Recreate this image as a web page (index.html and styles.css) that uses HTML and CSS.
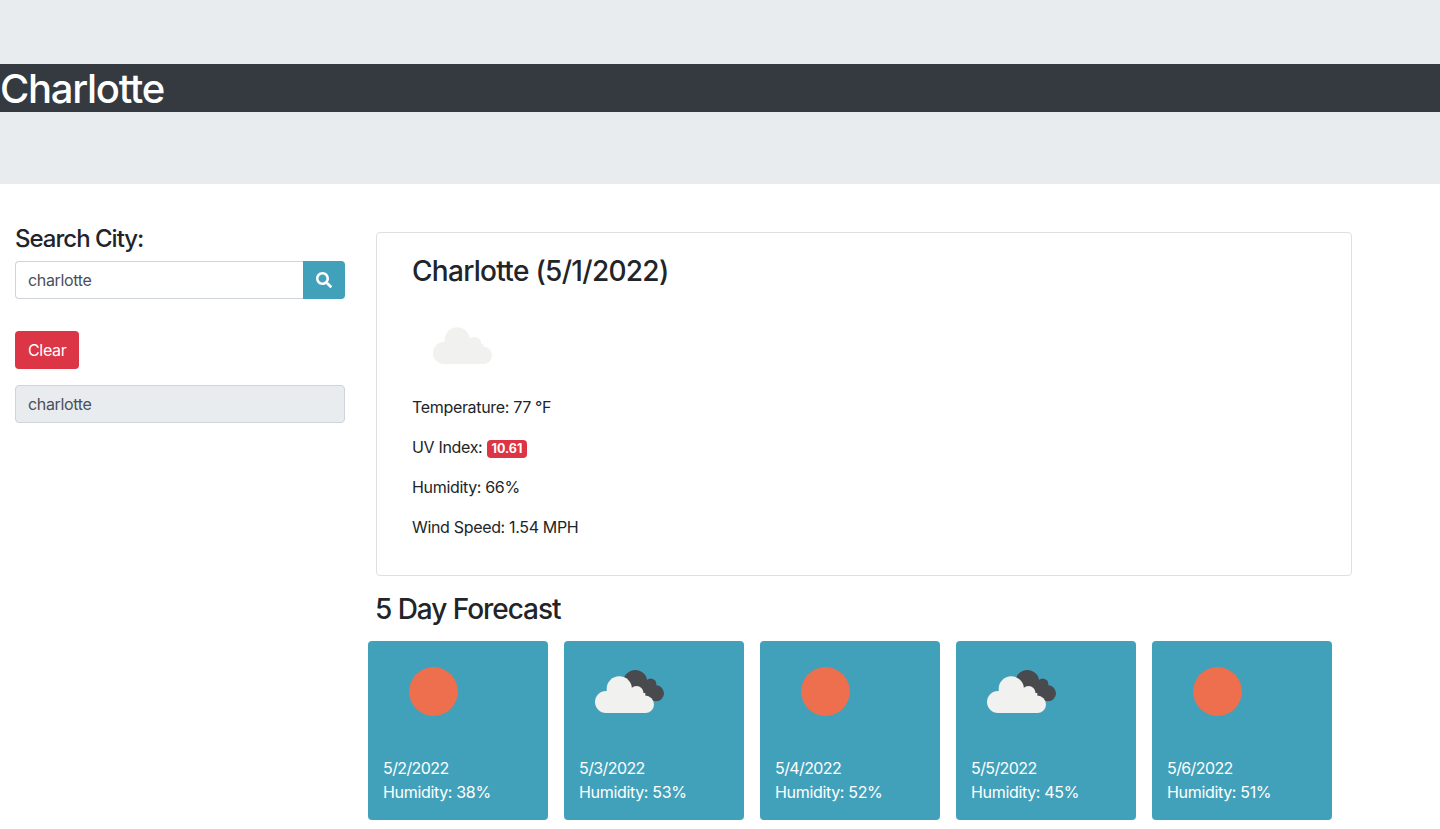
FILE: index.html
```html
<!DOCTYPE html>
<html lang="en">
<head>
  <meta charset="UTF-8" />
  <meta name="viewport" content="width=device-width, initial-scale=1.0"/>
  <title>Weather Dashboard</title>
  <link rel="stylesheet" href="styles.css">
</head>
<body>
  <header class="jumbotron">
    <h1 class="city-banner">Charlotte</h1>
  </header>

  <div class="page-row">
    <aside class="sidebar">
      <h4 class="search-label">Search City:</h4>
      <div class="search-group">
        <input class="search-input" type="text" value="charlotte" />
        <button class="search-btn" aria-label="Search">
          <svg width="16" height="16" viewBox="0 0 512 512"><path fill="#fff" d="M505 442.7L405.3 343c-4.5-4.5-10.6-7-17-7H372c27.6-35.3 44-79.7 44-128C416 93.1 322.9 0 208 0S0 93.1 0 208s93.1 208 208 208c48.3 0 92.7-16.4 128-44v16.3c0 6.4 2.5 12.5 7 17l99.7 99.7c9.4 9.4 24.6 9.4 33.9 0l28.3-28.3c9.4-9.4 9.4-24.6.1-34zM208 336c-70.7 0-128-57.2-128-128 0-70.7 57.2-128 128-128 70.7 0 128 57.2 128 128 0 70.7-57.2 128-128 128z"/></svg>
        </button>
      </div>
      <button class="clear-btn">Clear</button>
      <div class="history-item">charlotte</div>
    </aside>

    <main class="content">
      <section class="current-card">
        <h3 class="current-title">Charlotte (5/1/2022)</h3>
        <svg class="current-icon" width="100" height="100" viewBox="0 0 100 100">
          <use href="#cloud" />
        </svg>
        <p class="stat">Temperature: 77 °F</p>
        <p class="stat">UV Index: <span class="uv-badge">10.61</span></p>
        <p class="stat">Humidity: 66%</p>
        <p class="stat">Wind Speed: 1.54 MPH</p>
      </section>

      <h3 class="forecast-title">5 Day Forecast</h3>
      <div class="forecast-row">
        <div class="forecast-card">
          <svg class="forecast-icon" width="100" height="100" viewBox="0 0 100 100"><use href="#sun"/></svg>
          <div class="forecast-text forecast-date">5/2/2022</div>
          <div class="forecast-text">Humidity: 38%</div>
        </div>
        <div class="forecast-card">
          <svg class="forecast-icon" width="100" height="100" viewBox="0 0 100 100"><use href="#dark-cloud"/><use href="#cloud" x="-5"/></svg>
          <div class="forecast-text forecast-date">5/3/2022</div>
          <div class="forecast-text">Humidity: 53%</div>
        </div>
        <div class="forecast-card">
          <svg class="forecast-icon" width="100" height="100" viewBox="0 0 100 100"><use href="#sun"/></svg>
          <div class="forecast-text forecast-date">5/4/2022</div>
          <div class="forecast-text">Humidity: 52%</div>
        </div>
        <div class="forecast-card">
          <svg class="forecast-icon" width="100" height="100" viewBox="0 0 100 100"><use href="#dark-cloud"/><use href="#cloud" x="-5"/></svg>
          <div class="forecast-text forecast-date">5/5/2022</div>
          <div class="forecast-text">Humidity: 45%</div>
        </div>
        <div class="forecast-card">
          <svg class="forecast-icon" width="100" height="100" viewBox="0 0 100 100"><use href="#sun"/></svg>
          <div class="forecast-text forecast-date">5/6/2022</div>
          <div class="forecast-text">Humidity: 51%</div>
        </div>
      </div>
    </main>
  </div>

  <svg class="icon-defs" width="0" height="0">
    <defs>
      <circle id="sun" cx="50.5" cy="50.5" r="24.4" fill="#ee6f4d"/>
      <g id="cloud" fill="#f1f1ef">
        <circle cx="45.3" cy="48" r="12.7"/>
        <circle cx="62.5" cy="52" r="7"/>
        <circle cx="32" cy="61" r="11"/>
        <circle cx="71.3" cy="63.3" r="8.7"/>
        <rect x="32" y="52" width="39.3" height="20"/>
      </g>
      <g id="dark-cloud" fill="#484a4e">
        <circle cx="56.3" cy="41" r="12"/>
        <circle cx="71.7" cy="43.3" r="5.7"/>
        <circle cx="77" cy="52.3" r="8"/>
        <rect x="60" y="44" width="17" height="16"/>
      </g>
    </defs>
  </svg>
</body>
</html>
```

FILE: styles.css
```css
* {
  box-sizing: border-box;
}

body {
  margin: 0;
  font-family: Inter, 'Noto Sans', sans-serif;
  font-size: 16px;
  line-height: 1.5;
  letter-spacing: -0.33px;
  color: #212529;
  background: #fff;
}

.jumbotron {
  background-color: #e9ecef;
  padding: 64px 0 72px;
}

.city-banner {
  height: 48px;
  margin: 0;
  font-size: 40px;
  font-weight: 500;
  line-height: 50px;
  letter-spacing: -1.3px;
  color: #fff;
  background-color: #343a40;
}

.page-row {
  display: flex;
  padding-top: 40px;
}

.sidebar {
  width: 360px;
  flex: none;
  padding: 0 15px;
}

.search-label {
  margin: 0 0 7px;
  font-size: 24px;
  font-weight: 500;
  line-height: 30px;
  letter-spacing: -1px;
}

.search-group {
  display: flex;
  height: 38px;
  margin-bottom: 32px;
}

.search-input {
  flex: 1;
  min-width: 0;
  padding: 6px 12px;
  font: inherit;
  letter-spacing: inherit;
  color: #495057;
  border: 1px solid #ced4da;
  border-right: none;
  border-radius: 4px 0 0 4px;
}

.search-btn {
  display: flex;
  align-items: center;
  justify-content: center;
  width: 42px;
  padding: 0;
  border: none;
  border-radius: 0 4px 4px 0;
  background-color: #42a1ba;
}

.clear-btn {
  display: block;
  height: 38px;
  padding: 0 13px;
  margin-bottom: 16px;
  font: inherit;
  letter-spacing: inherit;
  color: #fff;
  border: none;
  border-radius: 4px;
  background-color: #dc3545;
}

.history-item {
  height: 38px;
  padding: 6px 12px;
  color: #495057;
  background-color: #e9ecef;
  border: 1px solid #ced4da;
  border-radius: 4px;
}

.content {
  width: 992px;
  padding-left: 16px;
}

.current-card {
  width: 976px;
  height: 344px;
  margin-top: 8px;
  padding: 20px 35px;
  border: 1px solid #dfdfdf;
  border-radius: 4px;
}

.current-title {
  margin: 0;
  font-size: 28px;
  font-weight: 500;
  line-height: 36px;
  letter-spacing: -0.7px;
}

.current-icon {
  display: block;
  margin: 3px 0;
}

.stat {
  margin: 0 0 16px;
  font-size: 16px;
  line-height: 24px;
}

.uv-badge {
  display: inline-block;
  padding: 3px 5px;
  font-size: 12.5px;
  font-weight: 700;
  line-height: 12px;
  letter-spacing: 0;
  color: #fff;
  background-color: #dc3545;
  border-radius: 4px;
}

.forecast-title {
  margin: 15px 0 14px -1px;
  font-size: 28px;
  font-weight: 500;
  line-height: 36px;
  letter-spacing: -1.05px;
}

.forecast-row {
  display: flex;
  gap: 16px;
  margin-left: -8px;
}

.forecast-card {
  width: 180px;
  height: 179px;
  padding: 0 15px;
  color: #fff;
  background-color: #42a1ba;
  border-radius: 4px;
}

.forecast-icon {
  display: block;
  margin: 0 0 15px;
}

.forecast-text {
  line-height: 24px;
}

.forecast-date {
  letter-spacing: -0.6px;
}

.icon-defs {
  position: absolute;
}
```
